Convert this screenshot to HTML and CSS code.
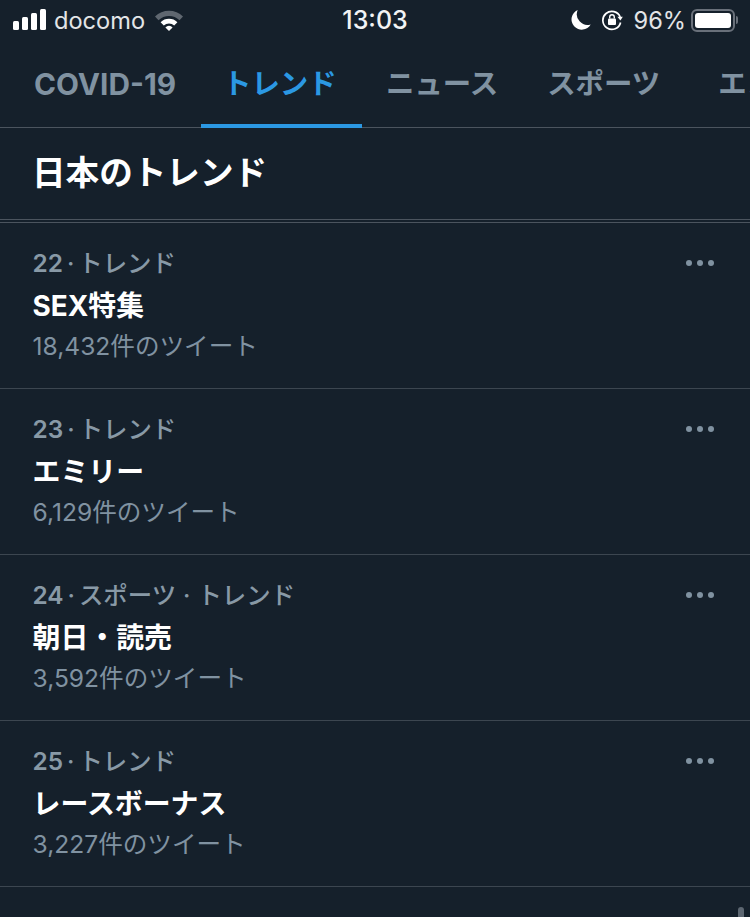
FILE: index.html
```html
<!DOCTYPE html>
<html lang="ja">
<head>
  <meta charset="UTF-8" />
  <meta name="viewport" content="width=device-width, initial-scale=1" />
  <title>トレンド</title>
  <link rel="stylesheet" href="styles.css">
</head>
<body>
  <div class="app">
    <!-- Status bar -->
    <div class="status-bar">
      <div class="status-left">
        <div class="signal">
          <span class="bar bar-1"></span>
          <span class="bar bar-2"></span>
          <span class="bar bar-3"></span>
          <span class="bar bar-4"></span>
        </div>
        <span class="carrier">docomo</span>
        <svg class="wifi" width="30" height="22" viewBox="0 0 30 22">
          <path d="M1 7.5 A20 20 0 0 1 29 7.5 L25.5 11.2 A15 15 0 0 0 4.5 11.2 Z" fill="#5f6770"/>
          <path d="M6.6 13.3 A12 12 0 0 1 23.4 13.3 L20.2 16.6 A7.5 7.5 0 0 0 9.8 16.6 Z" fill="#fff"/>
          <path d="M11.4 18.4 A5 5 0 0 1 18.6 18.4 L15 22 Z" fill="#fff"/>
        </svg>
      </div>
      <div class="status-time">13:03</div>
      <div class="status-right">
        <svg class="moon" width="20" height="22" viewBox="0 1 19.5 20.5">
          <path d="M6.5 1.5 A10 10 0 1 0 19.2 15.6 A10.5 10.5 0 0 1 6.5 1.5 Z" fill="#fff"/>
        </svg>
        <svg class="lock" width="22" height="22" viewBox="0 0 22 22">
          <path d="M19.2 8 A9 9 0 1 0 19.6 13.5" fill="none" stroke="#fff" stroke-width="1.7"/>
          <path d="M16.4 7.8 L21.8 7.8 L19.4 11.6 Z" fill="#fff"/>
          <rect x="7" y="9.5" width="8" height="6.5" rx="1" fill="#fff"/>
          <path d="M8.7 9.5 V8 A2.3 2.3 0 0 1 13.3 8 V9.5" fill="none" stroke="#fff" stroke-width="1.4"/>
        </svg>
        <span class="battery-text">96%</span>
        <div class="battery">
          <div class="battery-body"><div class="battery-fill"></div></div>
          <span class="battery-cap"></span>
        </div>
      </div>
    </div>

    <!-- Tabs -->
    <div class="tabs">
      <div class="tab tab-covid">COVID-19</div>
      <div class="tab tab-active">トレンド</div>
      <div class="tab tab-news">ニュース</div>
      <div class="tab">スポーツ</div>
      <div class="tab tab-ent">エンタメ</div>
    </div>

    <h2 class="section-title">日本のトレンド</h2>
    <div class="section-rule"></div>

    <!-- Trend list -->
    <div class="trend">
      <div class="trend-meta"><span class="rank">22</span><span class="dot">·</span>トレンド</div>
      <div class="trend-name">SEX特集</div>
      <div class="trend-count">18,432件のツイート</div>
      <div class="more"><i></i><i></i><i></i></div>
    </div>
    <div class="trend">
      <div class="trend-meta"><span class="rank">23</span><span class="dot">·</span>トレンド</div>
      <div class="trend-name">エミリー</div>
      <div class="trend-count">6,129件のツイート</div>
      <div class="more"><i></i><i></i><i></i></div>
    </div>
    <div class="trend">
      <div class="trend-meta"><span class="rank">24</span><span class="dot">·</span>スポーツ<span class="dot dot-wide">·</span>トレンド</div>
      <div class="trend-name">朝日・読売</div>
      <div class="trend-count">3,592件のツイート</div>
      <div class="more"><i></i><i></i><i></i></div>
    </div>
    <div class="trend">
      <div class="trend-meta"><span class="rank">25</span><span class="dot">·</span>トレンド</div>
      <div class="trend-name">レースボーナス</div>
      <div class="trend-count">3,227件のツイート</div>
      <div class="more"><i></i><i></i><i></i></div>
    </div>
    <div class="trend">
      <div class="trend-meta"><span class="rank">26</span><span class="dot">·</span>トレンド</div>
    </div>

    <div class="scroll-thumb"></div>
  </div>
</body>
</html>
```

FILE: styles.css
```css
* {
  margin: 0;
  padding: 0;
  box-sizing: border-box;
}

html, body {
  height: 100%;
  overflow: hidden;
}

body {
  background: #15202b;
  font-family: 'Inter', 'Noto Sans CJK JP', sans-serif;
  color: #fff;
}

.app {
  position: relative;
  width: 750px;
  height: 917px;
  overflow: hidden;
}

/* Status bar */
.status-bar {
  display: grid;
  grid-template-columns: 1fr auto 1fr;
  align-items: center;
  height: 40px;
  padding: 0 13px;
}

.status-left {
  display: flex;
  align-items: center;
}

.signal {
  display: flex;
  align-items: flex-end;
  gap: 3px;
  height: 21px;
  margin-right: 9px;
  margin-bottom: 2px;
}

.bar {
  width: 6px;
  background: #fff;
  border-radius: 1.5px;
}

.bar-1 { height: 9px; }
.bar-2 { height: 13px; }
.bar-3 { height: 17px; }
.bar-4 { height: 21px; }

.carrier {
  font-size: 23.6px;
  color: #e3e5e7;
  margin-right: 9px;
  margin-left: -1px;
}

.wifi {
  display: block;
}

.status-time {
  font-size: 25px;
  font-weight: 500;
  color: #f2f3f4;
}

.status-right {
  display: flex;
  align-items: center;
  justify-content: flex-end;
}

.moon {
  margin-right: 10px;
}

.lock {
  margin-right: 11px;
}

.battery-text {
  font-size: 23.6px;
  color: #e3e5e7;
  margin-right: 5px;
}

.battery {
  display: flex;
  align-items: center;
  margin-right: -1px;
}

.battery-body {
  width: 44px;
  height: 23px;
  border: 2px solid #69707a;
  border-radius: 6px;
  padding: 2px;
}

.battery-fill {
  width: 100%;
  height: 100%;
  background: #fff;
  border-radius: 3px;
}

.battery-cap {
  width: 2px;
  height: 8px;
  background: #69707a;
  border-radius: 0 2px 2px 0;
  margin-left: 1px;
}

/* Tabs */
.tabs {
  display: flex;
  height: 88px;
  border-bottom: 1px solid #4b545e;
  white-space: nowrap;
}

.tab {
  position: relative;
  flex: none;
  padding: 24px 25px 0;
  font-size: 28.4px;
  line-height: 40px;
  font-weight: 700;
  color: #8092a1;
}

.tab-covid {
  width: 201px;
  padding-left: 34px;
  padding-right: 0;
  font-size: 29.8px;
}

.tab-active {
  width: 161px;
  padding-left: 22px;
  padding-right: 0;
  color: #2b98e3;
}

.tab-active::after {
  content: '';
  position: absolute;
  left: 0;
  right: 0;
  bottom: -1px;
  height: 4px;
  background: #2b98e3;
}

.tab-news {
  padding-left: 24px;
  padding-right: 24px;
}

.tab-ent {
  padding-left: 33px;
}

/* Section heading */
.section-title {
  height: 91px;
  padding: 23px 32px 0;
  font-size: 33.6px;
  line-height: 44px;
  font-weight: 700;
}

.section-rule {
  height: 4px;
  border-top: 1px solid #4b545e;
  border-bottom: 1px solid #4b545e;
}

/* Trend rows */
.trend {
  position: relative;
  height: 166px;
  padding: 21px 32.5px 0;
  border-bottom: 1px solid #3c4650;
}

.trend-meta {
  font-size: 24.4px;
  line-height: 38px;
  font-weight: 500;
  color: #8899a6;
}

.rank {
  font-weight: 600;
}

.dot {
  margin: 0 4px;
}

.dot-wide {
  margin: 0 7px;
}

.trend-name {
  margin-top: 4px;
  font-size: 27.9px;
  line-height: 40px;
  font-weight: 700;
}

.trend-count {
  font-size: 24.6px;
  line-height: 40px;
  color: #8092a1;
}

.more {
  position: absolute;
  top: 37px;
  right: 36px;
  display: flex;
  gap: 5px;
}

.more i {
  width: 6px;
  height: 6px;
  border-radius: 50%;
  background: #8092a1;
}

.scroll-thumb {
  position: absolute;
  right: 6px;
  bottom: -34px;
  width: 6px;
  height: 44px;
  border-radius: 3px;
  background: #5d6772;
}
```
